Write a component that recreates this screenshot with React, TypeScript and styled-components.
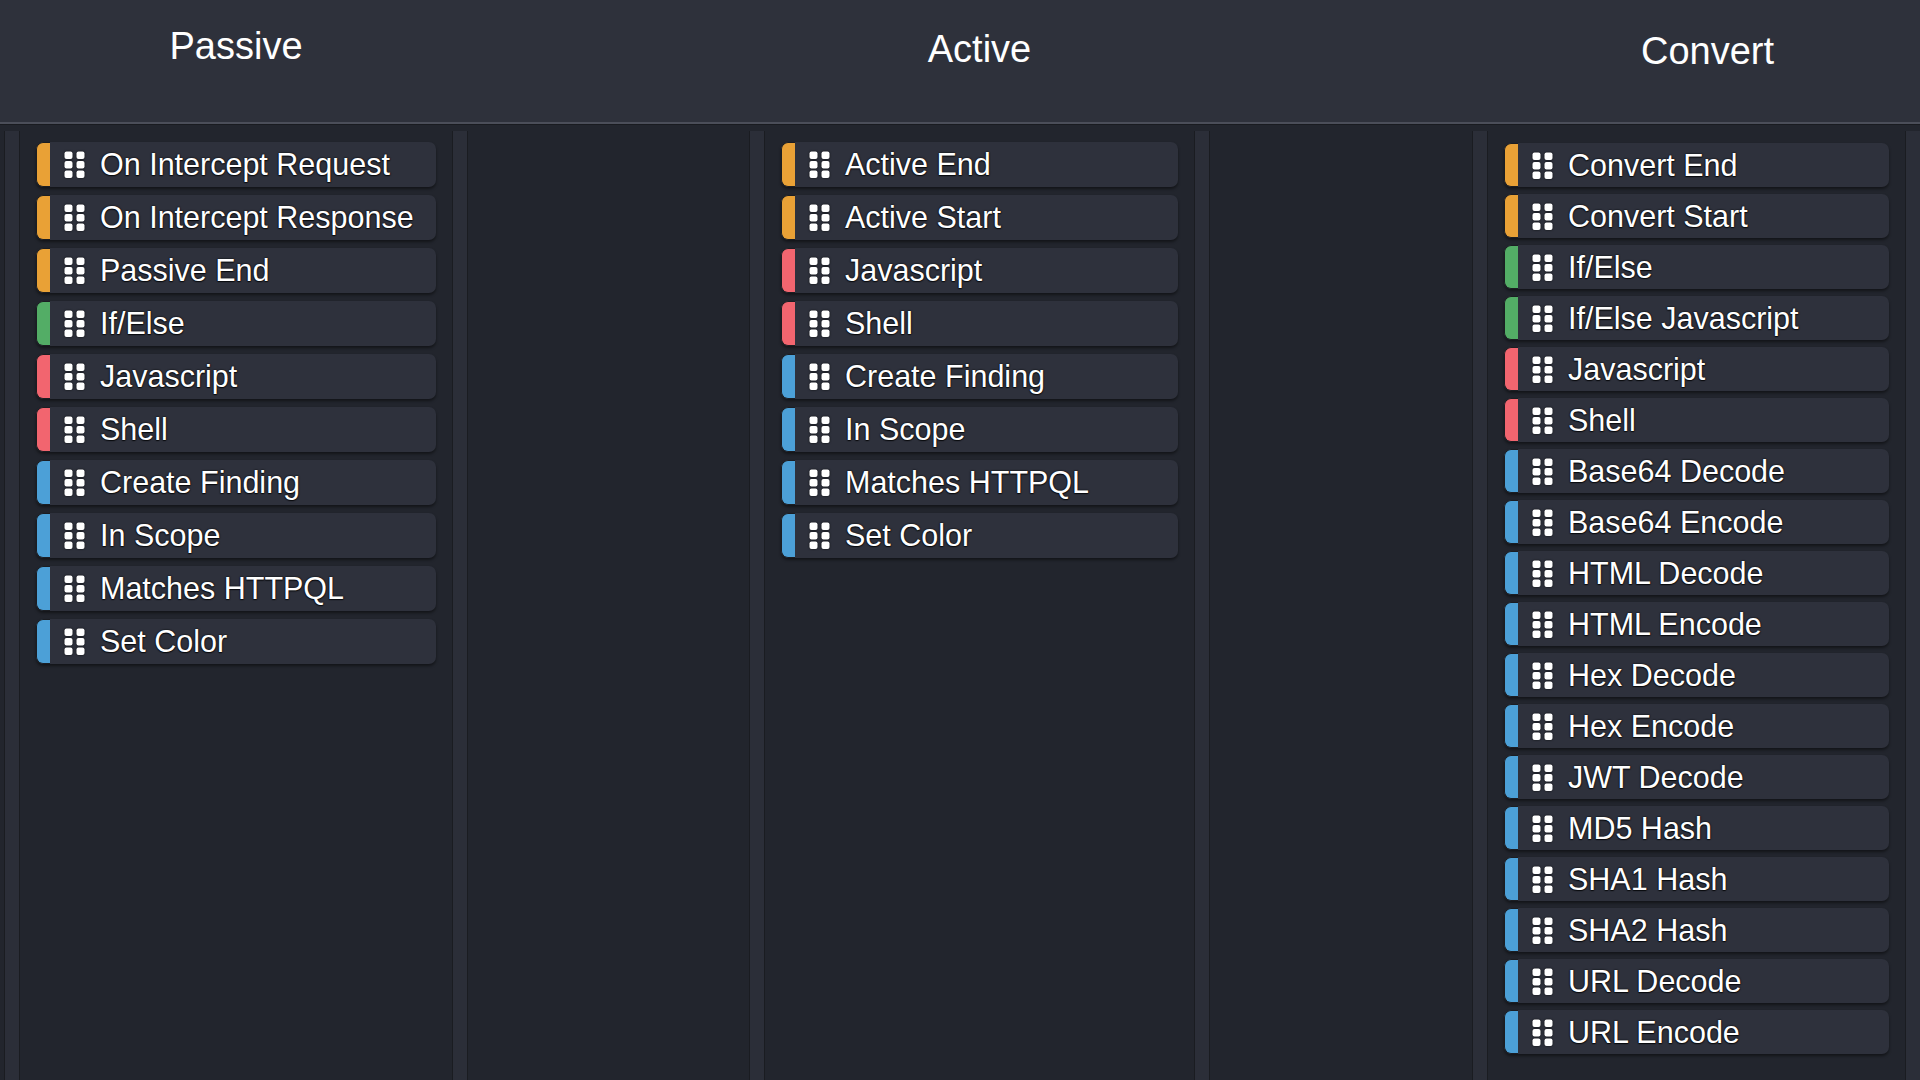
import React from "react";
import styled, { createGlobalStyle } from "styled-components";

type Kind = "flow" | "logic" | "code" | "action";

interface Node {
	label: string;
	kind: Kind;
}

interface Lane {
	title: string;
	width: number;
	offset: number;
	titleTop: number;
	titleShift: number;
	dense?: boolean;
	nodes: Array<Node>;
}

const ACCENT: Record<Kind, string> = {
	flow: "#e9a136",
	logic: "#53ad66",
	code: "#f2656f",
	action: "#4ca0d7",
};

const LANES: Array<Lane> = [
	{
		title: "Passive",
		width: 464,
		offset: 4,
		titleTop: 27,
		titleShift: 0,
		nodes: [
			{ label: "On Intercept Request", kind: "flow" },
			{ label: "On Intercept Response", kind: "flow" },
			{ label: "Passive End", kind: "flow" },
			{ label: "If/Else", kind: "logic" },
			{ label: "Javascript", kind: "code" },
			{ label: "Shell", kind: "code" },
			{ label: "Create Finding", kind: "action" },
			{ label: "In Scope", kind: "action" },
			{ label: "Matches HTTPQL", kind: "action" },
			{ label: "Set Color", kind: "action" },
		],
	},
	{
		title: "Active",
		width: 461,
		offset: 281,
		titleTop: 30,
		titleShift: 0,
		nodes: [
			{ label: "Active End", kind: "flow" },
			{ label: "Active Start", kind: "flow" },
			{ label: "Javascript", kind: "code" },
			{ label: "Shell", kind: "code" },
			{ label: "Create Finding", kind: "action" },
			{ label: "In Scope", kind: "action" },
			{ label: "Matches HTTPQL", kind: "action" },
			{ label: "Set Color", kind: "action" },
		],
	},
	{
		title: "Convert",
		width: 449,
		offset: 262,
		titleTop: 32,
		titleShift: 22,
		dense: true,
		nodes: [
			{ label: "Convert End", kind: "flow" },
			{ label: "Convert Start", kind: "flow" },
			{ label: "If/Else", kind: "logic" },
			{ label: "If/Else Javascript", kind: "logic" },
			{ label: "Javascript", kind: "code" },
			{ label: "Shell", kind: "code" },
			{ label: "Base64 Decode", kind: "action" },
			{ label: "Base64 Encode", kind: "action" },
			{ label: "HTML Decode", kind: "action" },
			{ label: "HTML Encode", kind: "action" },
			{ label: "Hex Decode", kind: "action" },
			{ label: "Hex Encode", kind: "action" },
			{ label: "JWT Decode", kind: "action" },
			{ label: "MD5 Hash", kind: "action" },
			{ label: "SHA1 Hash", kind: "action" },
			{ label: "SHA2 Hash", kind: "action" },
			{ label: "URL Decode", kind: "action" },
			{ label: "URL Encode", kind: "action" },
		],
	},
];

const GlobalStyle = createGlobalStyle`
	html, body {
		margin: 0;
		padding: 0;
		height: 100%;
		overflow: hidden;
		background: #22252d;
	}

	body {
		font-family: "Liberation Sans", Arial, sans-serif;
		color: #ffffff;
	}
`;

const Page = styled.div`
	display: flex;
	flex-direction: column;
	width: 1920px;
	height: 1080px;
	overflow: hidden;
	background: #22252d;
`;

const HeaderBar = styled.header`
	display: flex;
	flex: 0 0 auto;
	height: 122px;
	background: #2e313b;
	border-bottom: 2px solid #4b4e59;
	box-shadow: 0 1px 0 #191b20;
`;

const Board = styled.main`
	display: flex;
	flex: 1 1 auto;
	min-height: 0;
	padding-top: 7px;
`;

const Title = styled.h2<{ $width: number; $offset: number; $top: number; $shift: number }>`
	flex: 0 0 ${(p) => p.$width}px;
	margin: 0 0 0 ${(p) => p.$offset}px;
	padding: ${(p) => p.$top}px 0 0 ${(p) => p.$shift}px;
	box-sizing: border-box;
	text-align: center;
	font-size: 38px;
	font-weight: 400;
	line-height: 1;
	color: #ffffff;
`;

const Column = styled.section<{ $width: number; $offset: number }>`
	display: flex;
	flex: 0 0 ${(p) => p.$width}px;
	margin-left: ${(p) => p.$offset}px;
	min-height: 0;
`;

const Rail = styled.div`
	flex: 0 0 14px;
	background: #2b2e38;
	border-left: 1px solid #1a1c21;
	border-right: 1px solid #1a1c21;
`;

const List = styled.div<{ $dense?: boolean }>`
	display: flex;
	flex: 1 1 auto;
	flex-direction: column;
	gap: ${(p) => (p.$dense ? 7 : 8)}px;
	padding: ${(p) => (p.$dense ? 12 : 11)}px 16px 0 16px;
	background: #22252d;
`;

const Card = styled.div<{ $dense?: boolean }>`
	display: flex;
	align-items: center;
	flex: 0 0 ${(p) => (p.$dense ? 44 : 45)}px;
	background: #2e313c;
	border-radius: 7px;
	box-shadow: 0 2px 3px rgba(0, 0, 0, 0.45);
	overflow: hidden;
`;

const Accent = styled.span<{ $color: string }>`
	align-self: stretch;
	flex: 0 0 13px;
	background: ${(p) => p.$color};
	border: 1px solid #1b1d22;
	border-right: none;
	border-radius: 7px 0 0 7px;
`;

const Grip = styled.svg`
	flex: 0 0 auto;
	width: 21px;
	height: 27px;
	margin-left: 14px;
	filter: drop-shadow(0 0 1px #0d0e11);
`;

const Label = styled.span`
	margin-left: 15px;
	font-size: 30.5px;
	line-height: 1;
	color: #ffffff;
	white-space: nowrap;
	text-shadow: 0 0 1px #0b0c0f, 0 0 2px #0b0c0f, 0 1px 1px #0b0c0f;
`;

const GripIcon = () => (
	<Grip viewBox="0 0 21 27">
		{[0, 12].map((x) =>
			[0, 9.5, 19].map((y) => (
				<rect key={`${x}-${y}`} x={x + 0.5} y={y + 0.5} width="8" height="7.5" rx="2" fill="#ffffff" />
			))
		)}
	</Grip>
);

const App = (): JSX.Element => {
	return (
		<Page>
			<GlobalStyle />
			<HeaderBar>
				{LANES.map((lane) => (
					<Title
						key={lane.title}
						$width={lane.width}
						$offset={lane.offset}
						$top={lane.titleTop}
						$shift={lane.titleShift}
					>
						{lane.title}
					</Title>
				))}
			</HeaderBar>
			<Board>
				{LANES.map((lane) => (
					<Column key={lane.title} $width={lane.width} $offset={lane.offset}>
						<Rail />
						<List $dense={lane.dense}>
							{lane.nodes.map((node) => (
								<Card key={node.label} $dense={lane.dense}>
									<Accent $color={ACCENT[node.kind]} />
									<GripIcon />
									<Label>{node.label}</Label>
								</Card>
							))}
						</List>
						<Rail />
					</Column>
				))}
			</Board>
		</Page>
	);
};

export default App;
